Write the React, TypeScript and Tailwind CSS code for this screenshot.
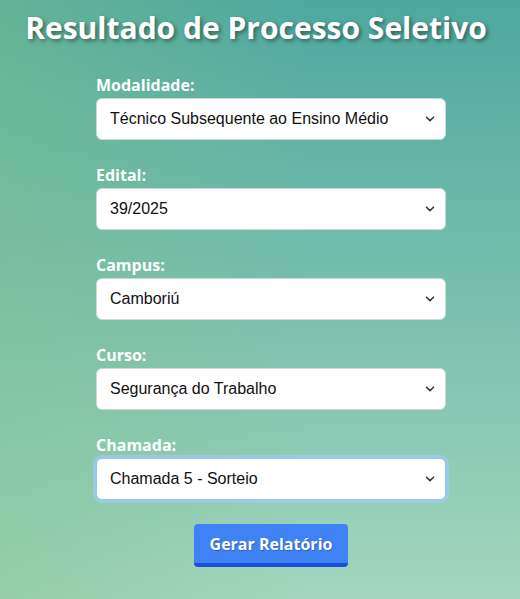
import React from "react";

const fields: { label: string; value: string; focused?: boolean }[] = [
  { label: "Modalidade:", value: "Técnico Subsequente ao Ensino Médio" },
  { label: "Edital:", value: "39/2025" },
  { label: "Campus:", value: "Camboriú" },
  { label: "Curso:", value: "Segurança do Trabalho" },
  { label: "Chamada:", value: "Chamada 5 - Sorteio", focused: true },
];

function Chevron() {
  return (
    <svg
      className="pointer-events-none absolute right-[11px] top-1/2 -translate-y-1/2"
      width="10"
      height="6"
      viewBox="0 0 10 6"
      fill="none"
    >
      <path d="M1.5 1.2 L5 4.6 L8.5 1.2" stroke="#3a3a3a" strokeWidth="1.6" strokeLinecap="round" strokeLinejoin="round" />
    </svg>
  );
}

export default function App() {
  return (
    <div
      className="w-[520px] h-[599px] overflow-hidden bg-[linear-gradient(to_right,rgba(130,195,140,0.4),rgba(130,195,140,0)_60%),linear-gradient(to_bottom,#4ea89e,#a3d6bd)]"
      style={{ fontFamily: "'Open Sans', sans-serif" }}
    >
      <h1 className="pt-[9px] text-center text-[30px] font-bold leading-[38px] text-white [text-shadow:2px_2px_4px_rgba(0,0,0,0.45)] pr-[8px]">
        Resultado de Processo Seletivo
      </h1>
      <div className="ml-[96px] mt-[28px] w-[350px] flex flex-col">
        {fields.map((f) => (
          <div key={f.label} className="mb-[25px] flex flex-col">
            <label className="text-[16px] font-bold leading-[20px] text-white mb-[3px]">
              {f.label}
            </label>
            <div className="relative">
              <select
                defaultValue={f.value}
                className={
                  f.focused
                    ? "block h-[42px] w-[350px] appearance-none rounded-[6px] border border-[#93c5fd] bg-white pl-[13px] pr-[30px] text-[16px] text-[#111] outline-none ring-[3px] ring-[#a5c8f5]/70"
                    : "block h-[42px] w-[350px] appearance-none rounded-[6px] border border-[#cfd6dc] bg-white pl-[13px] pr-[30px] text-[16px] text-[#111] outline-none"
                }
                style={{ fontFamily: "'Liberation Sans', Arial, sans-serif" }}
              >
                <option>{f.value}</option>
              </select>
              <Chevron />
            </div>
          </div>
        ))}
        <div className="flex justify-center -mt-[1px]">
          <button className="h-[43px] w-[154px] rounded-[4px] border-b-[4px] border-[#1d4ed8] bg-[#3f82f6] text-[16px] font-bold text-white [text-shadow:1px_1px_1px_rgba(0,0,0,0.25)]">
            Gerar Relatório
          </button>
        </div>
      </div>
    </div>
  );
}
